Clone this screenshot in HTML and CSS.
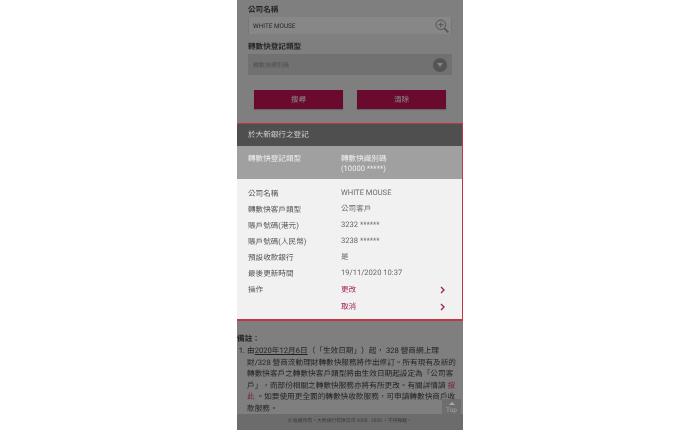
FILE: index.html
```html
<!DOCTYPE html>
<html lang="zh-Hant">
<head>
  <meta charset="UTF-8" />
  <title>轉數快登記</title>
  <link rel="stylesheet" href="styles.css">
</head>
<body>
  <div class="phone">
    <!-- search form, dimmed by the popup -->
    <div class="form">
      <div class="label">公司名稱</div>
      <div class="field">
        <span>WHITE MOUSE</span>
        <svg class="lens" width="14" height="14" viewBox="0 0 14 14" fill="none" stroke="#565656" stroke-width="1">
          <circle cx="5.8" cy="5.8" r="4.8"/>
          <path d="M5.8 3.2v5.2M3.2 5.8h5.2"/>
          <path d="M9.4 9.4l4 4" stroke-width="1.8"/>
        </svg>
      </div>
      <div class="label second">轉數快登記類型</div>
      <div class="select">
        <span>轉數快識別碼</span>
        <i class="arrow"></i>
      </div>
      <div class="buttons">
        <div class="btn">搜尋</div>
        <div class="btn">清除</div>
      </div>
    </div>

    <!-- popup -->
    <div class="panel">
      <div class="panel-title">於大新銀行之登記</div>
      <div class="panel-head">
        <div>轉數快登記類型</div>
        <div>轉數快識別碼<br>(10000 *****)</div>
      </div>
      <div class="rows">
        <div class="row"><div>公司名稱</div><div>WHITE MOUSE</div></div>
        <div class="row"><div>轉數快客戶類型</div><div>公司客戶</div></div>
        <div class="row"><div>賬戶號碼(港元)</div><div>3232 ******</div></div>
        <div class="row"><div>賬戶號碼(人民幣)</div><div>3238 ******</div></div>
        <div class="row"><div>預設收款銀行</div><div>是</div></div>
        <div class="row"><div>最後更新時間</div><div>19/11/2020 10:37</div></div>
        <div class="row action"><div>操作</div><div>更改</div>
          <svg width="5" height="8" viewBox="0 0 5 8" fill="none" stroke="#a4245c" stroke-width="1.4"><path d="M1 1l3 3-3 3"/></svg>
        </div>
        <div class="row action"><div></div><div>取消</div>
          <svg width="5" height="8" viewBox="0 0 5 8" fill="none" stroke="#a4245c" stroke-width="1.4"><path d="M1 1l3 3-3 3"/></svg>
        </div>
      </div>
    </div>

    <!-- notes -->
    <div class="notes">
      <div class="notes-title">備註：</div>
      <ol>
        <li>由<u>2020年12月6日</u>（「生效日期」）起， 328 營商網上理<br>財/328 營商流動理財轉數快服務將作出修訂。所有現有及新的<br>轉數快客戶之轉數快客戶類型將由生效日期起設定為「公司客<br>戶」，而部份相關之轉數快服務亦將有所更改。有關詳情請 <a>按<br>此</a> 。如要使用更全面的轉數快收款服務，可申請轉數快商戶收<br>款服務。</li>
      </ol>
    </div>
    <div class="footer">© 版權所有。大新銀行有限公司 2000 - 2020 。不得轉載。</div>
    <div class="top"><i></i>Top</div>
  </div>
</body>
</html>
```
FILE: styles.css
```css
html, body { margin: 0; padding: 0; height: 430px; overflow: hidden; background: #fff; }
body { font-family: "Roboto", "Noto Sans CJK TC", sans-serif; display: flex; justify-content: center; text-rendering: geometricPrecision; text-spacing-trim: space-all; }

.phone { position: relative; width: 226px; height: 430px; background: #7f7f7f; overflow: hidden; filter: blur(0.35px); }

.form { height: 123px; padding: 4px 11px 0; box-sizing: border-box; }
.label { font-size: 7.6px; line-height: 11px; font-weight: 700; color: #262626; }
.label.second { margin-top: 7px; }
.field { display: flex; justify-content: space-between; align-items: center; height: 17px; margin-top: 2px; padding: 0 2px 0 4px; background: #878787; border-left: 1px solid #777; border-right: 1px solid #777; font-size: 6.4px; color: #262626; }
.select { display: flex; justify-content: space-between; align-items: center; height: 21px; margin-top: 2px; padding-left: 5px; background: #717171; font-size: 6px; color: #505050; }
.arrow { position: relative; width: 14px; height: 14px; margin-right: 5px; border-radius: 50%; background: #545454; }
.arrow:after { content: ""; position: absolute; left: 3.5px; top: 5.5px; border: 3.5px solid transparent; border-top: 4px solid #858585; border-bottom: 0; }
.buttons { display: flex; gap: 14px; margin: 15px 0 0 6px; width: 192px; }
.btn { flex: 1; height: 19px; line-height: 19px; background: #6a0a2e; color: #8b8b8b; font-size: 7.6px; text-align: center; box-shadow: 0 1px 1px #666; }

.panel { border: 1px solid #c0373f; border-width: 1px 1px 2px 0; background: #f1f1f1; }
.panel-title { height: 22px; line-height: 22px; padding-left: 11px; background: #4f4f4f; color: #cfcfcf; font-size: 7.6px; }
.panel-head { display: grid; grid-template-columns: 93px 1fr; height: 33px; padding: 8px 0 0 11px; box-sizing: border-box; background: #a0a0a0; color: #eee; font-size: 7.6px; line-height: 10px; }
.rows { padding: 7px 0 4px 11px; }
.row { display: grid; grid-template-columns: 93px 1fr 22px; height: 16px; line-height: 16px; font-size: 7.6px; color: #555; }
.row div + div { line-height: 14px; color: #6a6a6a; }
.row svg { margin-top: 4px; }
.row.action div + div { line-height: 16px; color: #a4245c; }
.row.action + .row.action { margin-top: 1px; }

.notes { height: 93px; font-size: 7.65px; line-height: 11.5px; color: #232323; white-space: nowrap; }
.notes-title { font-weight: 700; height: 13px; padding-top: 11px; line-height: 13px; }
.notes ol { margin: 0; padding: 0 0 0 10px; }
.notes a { color: #7a1a40; }

.footer { height: 16px; line-height: 16px; background: #6c6c6c; color: #3a3a3a; font-size: 4.8px; text-align: center; }

.top { position: absolute; left: 205px; top: 399px; width: 19px; height: 15px; background: #6e6e6e; color: #a4a4a4; font-size: 6.5px; line-height: 8px; text-align: center; }
.top i { display: block; width: 0; height: 0; margin: 3px auto 1px; border: 3px solid transparent; border-top: 0; border-bottom: 3px solid #a9a9a9; }
```
